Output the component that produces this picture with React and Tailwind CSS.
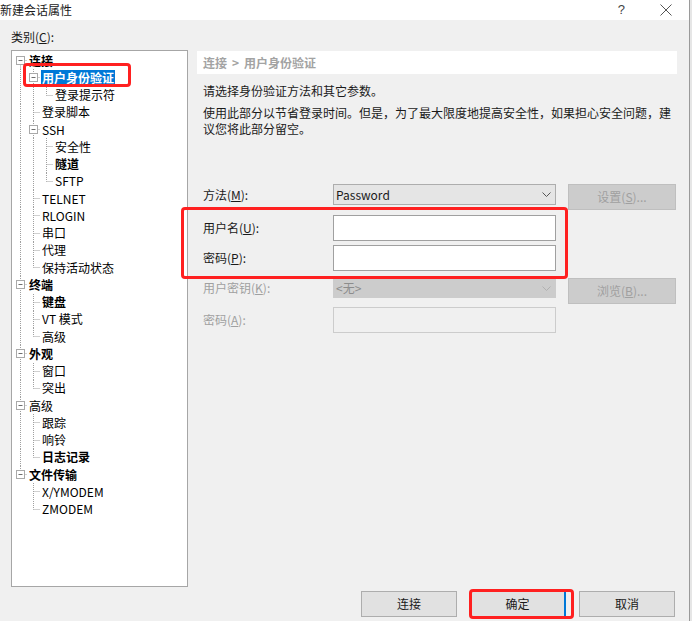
import React from "react";

const ROW_H = 17.25;

const treeRows = [
  { g: [], c: "first", exp: true, t: "连接", b: true },
  { g: ["line"], c: "mid", exp: true, t: "用户身份验证", b: true, sel: true },
  { g: ["line", "line"], c: "last", t: "登录提示符" },
  { g: ["line"], c: "mid", t: "登录脚本" },
  { g: ["line"], c: "mid", exp: true, t: "SSH" },
  { g: ["line", "line"], c: "mid", t: "安全性" },
  { g: ["line", "line"], c: "mid", t: "隧道", b: true },
  { g: ["line", "line"], c: "last", t: "SFTP" },
  { g: ["line"], c: "mid", t: "TELNET" },
  { g: ["line"], c: "mid", t: "RLOGIN" },
  { g: ["line"], c: "mid", t: "串口" },
  { g: ["line"], c: "mid", t: "代理" },
  { g: ["line"], c: "last", t: "保持活动状态" },
  { g: [], c: "mid", exp: true, t: "终端", b: true },
  { g: ["line"], c: "mid", t: "键盘", b: true },
  { g: ["line"], c: "mid", t: "VT 模式" },
  { g: ["line"], c: "last", t: "高级" },
  { g: [], c: "mid", exp: true, t: "外观", b: true },
  { g: ["line"], c: "mid", t: "窗口" },
  { g: ["line"], c: "last", t: "突出" },
  { g: [], c: "mid", exp: true, t: "高级" },
  { g: ["line"], c: "mid", t: "跟踪" },
  { g: ["line"], c: "mid", t: "响铃" },
  { g: ["line"], c: "last", t: "日志记录", b: true },
  { g: [], c: "last", exp: true, t: "文件传输", b: true },
  { g: ["none"], c: "mid", t: "X/YMODEM" },
  { g: ["none"], c: "last", t: "ZMODEM" },
];

function Guide({ type, exp }) {
  const c = 6.5;
  const m = 8.5;
  const dot = { stroke: "#a0a0a0", strokeWidth: 1, strokeDasharray: "1 1" };
  return (
    <svg width="13" height={ROW_H} viewBox={`0 0 13 ${ROW_H}`} className="shrink-0 block">
      {(type === "line" || type === "mid") && <line x1={c} y1={0} x2={c} y2={ROW_H} {...dot} />}
      {type === "last" && <line x1={c} y1={0} x2={c} y2={m} {...dot} />}
      {type === "first" && <line x1={c} y1={m} x2={c} y2={ROW_H} {...dot} />}
      {type !== "line" && type !== "none" && <line x1={c} y1={m} x2={13} y2={m} {...dot} />}
      {exp && (
        <>
          <rect x={2.5} y={4.5} width={8} height={8} fill="#fff" stroke="#a9a9a9" />
          <line x1={4.5} y1={m} x2={8.5} y2={m} stroke="#6e6e6e" />
        </>
      )}
    </svg>
  );
}

function TreeRow({ row }) {
  return (
    <div className="flex items-center h-[17.25px]">
      {row.g.map((g, i) => (
        <Guide key={i} type={g} />
      ))}
      <Guide type={row.c} exp={row.exp} />
      <span
        className={`ml-[1px] px-[1px] h-[16px] leading-[16px] whitespace-nowrap text-[12px] ${
          row.b ? "font-bold" : ""
        } ${row.sel ? "bg-[#0078d7] text-white" : "text-black"}`}
      >
        {row.t}
      </span>
    </div>
  );
}

function Chevron({ color }) {
  return (
    <svg width="9" height="5" viewBox="0 0 9 5">
      <polyline points="0.5,0.5 4.5,4.5 8.5,0.5" fill="none" stroke={color} strokeWidth="1" />
    </svg>
  );
}

function Label({ children, disabled }) {
  return (
    <div
      className={`w-[136px] shrink-0 pl-[6px] text-[12px] ${
        disabled ? "text-[#a0a0a0]" : "text-[#1a1a1a]"
      }`}
    >
      {children}
    </div>
  );
}

function SideButton({ children }) {
  return (
    <div className="ml-[12px] w-[108px] h-[26px] bg-[#cccccc] border border-[#bfbfbf] flex items-center justify-center text-[12px] text-[#a0a0a0]">
      {children}
    </div>
  );
}

function DialogButton({ children, focused }) {
  return (
    <div
      className={`w-[96px] h-[26px] bg-[#e1e1e1] border border-[#adadad] flex items-center justify-center text-[12px] text-[#1a1a1a] ${
        focused ? "border-r-2 border-r-[#0078d7]" : ""
      }`}
    >
      {children}
    </div>
  );
}

export default function App() {
  return (
    <div className="relative w-[692px] h-[621px] overflow-hidden flex font-['Noto_Sans_CJK_SC','Liberation_Sans',sans-serif] select-none">
      <div className="w-[689px] h-full flex flex-col">
        {/* title bar */}
        <div className="h-[20px] bg-white flex items-center shrink-0">
          <span className="text-[12px] text-[#1a1a1a] leading-[20px]">新建会话属性</span>
          <span className="ml-auto mr-[35px] text-[13px] text-[#444] font-['Liberation_Sans',sans-serif]">?</span>
          <svg width="12" height="12" viewBox="0 0 12 12" className="mr-[17px]">
            <line x1="0.5" y1="0.5" x2="11.5" y2="11.5" stroke="#555" strokeWidth="1" />
            <line x1="11.5" y1="0.5" x2="0.5" y2="11.5" stroke="#555" strokeWidth="1" />
          </svg>
        </div>

        {/* body */}
        <div className="flex-1 bg-[#f0f0f0] pl-[11px] pr-[12px] flex flex-col">
          <div className="flex">
            {/* left: category tree */}
            <div className="w-[177px] shrink-0 pt-[9px]">
              <div className="h-[16px] leading-[16px] text-[12px] text-[#1a1a1a]">
                类别(<span className="underline">C</span>):
              </div>
              <div className="mt-[5px] h-[537px] bg-white border border-[#a6a6a6] pl-[2px] pt-[1px] overflow-hidden">
                {treeRows.map((row, i) => (
                  <TreeRow key={i} row={row} />
                ))}
              </div>
            </div>

            {/* right: settings */}
            <div className="ml-[9px] flex-1 pt-[31px]">
              <div className="h-[23px] bg-white pl-[6px] flex items-center text-[12px] font-bold text-[#a3a3a3]">
                <span>连接</span>
                <span className="mx-[5px]">&gt;</span>
                <span>用户身份验证</span>
              </div>
              <div className="pl-[6px] text-[12px] text-[#1a1a1a]">
                <p className="mt-[9px] leading-[16px]">请选择身份验证方法和其它参数。</p>
                <p className="mt-[6px] leading-[16px]">
                  使用此部分以节省登录时间。但是，为了最大限度地提高安全性，如果担心安全问题，建
                  <br />
                  议您将此部分留空。
                </p>
              </div>

              <div className="mt-[47px] flex flex-col">
                <div className="flex items-start">
                  <div className="h-[21px] flex items-center">
                    <Label>
                      方法(<span className="underline">M</span>):
                    </Label>
                  </div>
                  <div className="w-[223px] h-[21px] bg-[#e5e5e5] border border-[#adadad] flex items-center justify-between pl-[2px] pr-[4px]">
                    <span className="text-[12px] text-[#1a1a1a]">Password</span>
                    <Chevron color="#555" />
                  </div>
                  <SideButton>
                    设置(<span className="underline">S</span>)...
                  </SideButton>
                </div>

                <div className="mt-[5px] flex items-center">
                  <Label>
                    用户名(<span className="underline">U</span>):
                  </Label>
                  <div className="w-[223px] h-[26px] bg-white border border-[#a0a0a0]" />
                </div>

                <div className="mt-[4px] flex items-center">
                  <Label>
                    密码(<span className="underline">P</span>):
                  </Label>
                  <div className="w-[223px] h-[26px] bg-white border border-[#a0a0a0]" />
                </div>

                <div className="mt-[7px] flex items-start">
                  <div className="h-[20px] flex items-center">
                    <Label disabled>
                      用户密钥(<span className="underline">K</span>):
                    </Label>
                  </div>
                  <div className="w-[223px] h-[20px] bg-[#cccccc] border border-[#cccccc] flex items-center justify-between pl-[2px] pr-[4px]">
                    <span className="text-[12px] text-[#8c8c8c]">&lt;无&gt;</span>
                    <Chevron color="#b0b0b0" />
                  </div>
                  <SideButton>
                    浏览(<span className="underline">B</span>)...
                  </SideButton>
                </div>

                <div className="mt-[3px] flex items-center">
                  <Label disabled>
                    密码(<span className="underline">A</span>):
                  </Label>
                  <div className="w-[223px] h-[26px] bg-[#f0f0f0] border border-[#cccccc]" />
                </div>
              </div>
            </div>
          </div>

          {/* dialog buttons */}
          <div className="mt-[4px] flex justify-end gap-[13px] pr-[2px]">
            <DialogButton>连接</DialogButton>
            <DialogButton focused>确定</DialogButton>
            <DialogButton>取消</DialogButton>
          </div>
        </div>
      </div>

      {/* edge of the window behind */}
      <div className="w-[3px] h-full bg-[#e6e6e6] border-l border-[#9a9a9a]" />

      {/* red annotation boxes */}
      <div className="absolute left-[23px] top-[63px] w-[108px] h-[24px] border-[3px] border-[#ff2020] rounded-[4px]" />
      <div className="absolute left-[181px] top-[207px] w-[387px] h-[72px] border-[3px] border-[#ff2020] rounded-[4px]" />
      <div className="absolute left-[469px] top-[589px] w-[105px] h-[30px] border-[3px] border-[#ff2020] rounded-[4px]" />
    </div>
  );
}
